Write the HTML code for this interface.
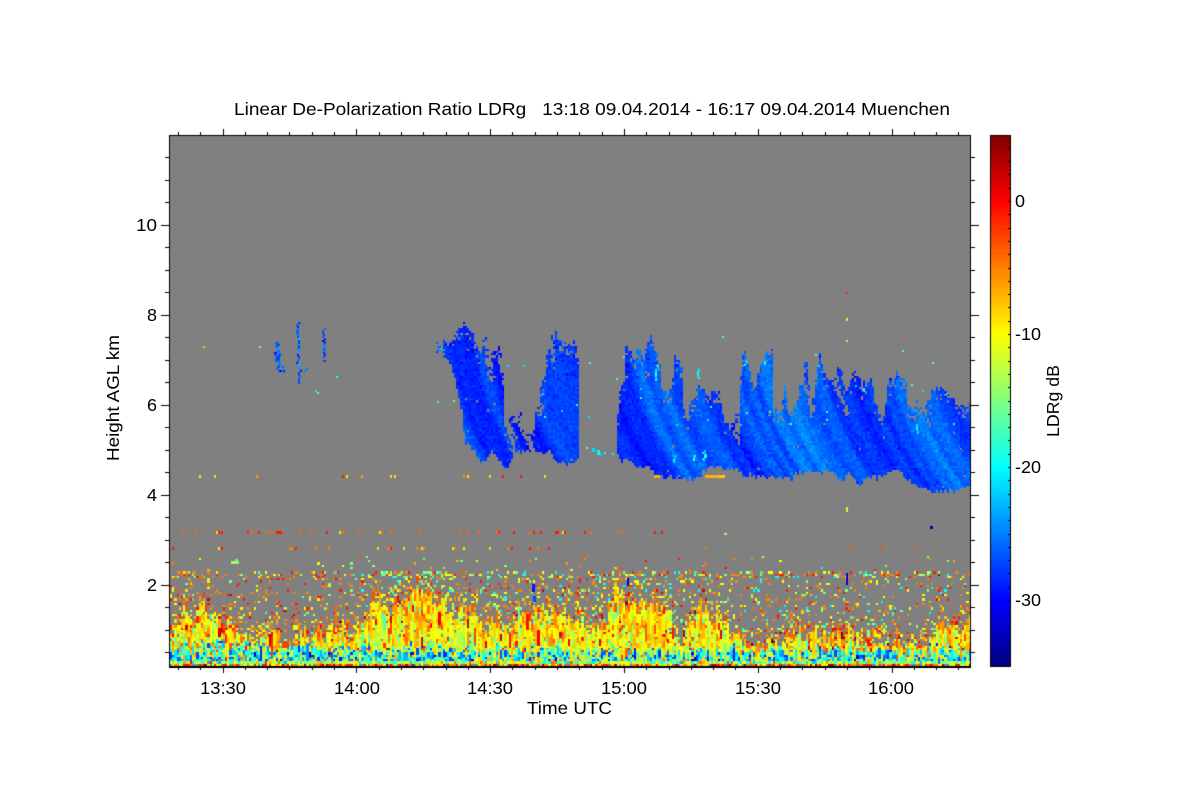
<!DOCTYPE html>
<html><head><meta charset="utf-8"><title>LDRg</title>
<style>
html,body{margin:0;padding:0;background:#fff;width:1200px;height:800px;overflow:hidden}
canvas,svg{position:absolute;left:0;top:0}
text{font-family:"Liberation Sans",sans-serif;font-size:17.5px;fill:#000}
</style></head><body>
<canvas id="c" width="1200" height="800"></canvas>
<svg width="1200" height="800" viewBox="0 0 1200 800">
<text x="234" y="115" textLength="716" lengthAdjust="spacingAndGlyphs" xml:space="preserve" style="white-space:pre">Linear De-Polarization Ratio LDRg   13:18 09.04.2014 - 16:17 09.04.2014 Muenchen</text>
<text x="200" y="694" textLength="46" lengthAdjust="spacingAndGlyphs">13:30</text>
<text x="334" y="694" textLength="46" lengthAdjust="spacingAndGlyphs">14:00</text>
<text x="467" y="694" textLength="46" lengthAdjust="spacingAndGlyphs">14:30</text>
<text x="601" y="694" textLength="46" lengthAdjust="spacingAndGlyphs">15:00</text>
<text x="735" y="694" textLength="46" lengthAdjust="spacingAndGlyphs">15:30</text>
<text x="868" y="694" textLength="46" lengthAdjust="spacingAndGlyphs">16:00</text>
<text x="527" y="714" textLength="85" lengthAdjust="spacingAndGlyphs">Time UTC</text>
<text x="136" y="231" textLength="21" lengthAdjust="spacingAndGlyphs">10</text>
<text x="147" y="321" textLength="10" lengthAdjust="spacingAndGlyphs">8</text>
<text x="147" y="411" textLength="10" lengthAdjust="spacingAndGlyphs">6</text>
<text x="147" y="501" textLength="10" lengthAdjust="spacingAndGlyphs">4</text>
<text x="147" y="591" textLength="10" lengthAdjust="spacingAndGlyphs">2</text>
<text transform="translate(119,461) rotate(-90)" textLength="126" lengthAdjust="spacingAndGlyphs">Height AGL km</text>
<text x="1015" y="207" textLength="10" lengthAdjust="spacingAndGlyphs">0</text>
<text x="1015" y="340" textLength="26" lengthAdjust="spacingAndGlyphs">-10</text>
<text x="1015" y="473" textLength="26" lengthAdjust="spacingAndGlyphs">-20</text>
<text x="1015" y="606" textLength="26" lengthAdjust="spacingAndGlyphs">-30</text>
<text transform="translate(1059,437) rotate(-90)" textLength="72" lengthAdjust="spacingAndGlyphs">LDRg dB</text>
</svg>
<script>
(function(){
var ctx=document.getElementById('c').getContext('2d');
ctx.fillStyle='#fff';ctx.fillRect(0,0,1200,800);
var R=(function(s){return function(){s|=0;s=s+0x6D2B79F5|0;var t=Math.imul(s^s>>>15,1|s);t=t+Math.imul(t^t>>>7,61|t)^t;return((t^t>>>14)>>>0)/4294967296}})(12345);
function G(){return R()+R()+R()+R()-2}
function cl(a){return a<0?0:a>1?1:a}
function jet(v){var t=(v+35)/40;t=Math.round(cl(t)*127)/127;
 var r=cl(Math.min(4*t-1.5,-4*t+4.5)),g=cl(Math.min(4*t-.5,-4*t+3.5)),b=cl(Math.min(4*t+.5,-4*t+2.5));
 return 'rgb('+Math.round(r*255)+','+Math.round(g*255)+','+Math.round(b*255)+')'}
function interp(p,x){if(x<=p[0][0])return p[0][1];for(var i=1;i<p.length;i++){if(x<=p[i][0]){var a=p[i-1],b=p[i];return a[1]+(b[1]-a[1])*(x-a[0])/((b[0]-a[0])||1)}}return p[p.length-1][1]}
function sn(n,sc){var k=[],o=[];for(var i=0;i<n/sc+3;i++)k.push(R()*2-1);for(i=0;i<n;i++){var f=i/sc,a=Math.floor(f),w=f-a;w=w*w*(3-2*w);o.push(k[a]*(1-w)+k[a+1]*w)}return o}
function z3(a){return a.map(function(p){return[420+p[0]/3,310+p[1]/3]})}
function z4(a){return a.map(function(p){return[700+p[0]/3,320+p[1]/3]})}

ctx.fillStyle='#808080';ctx.fillRect(170,135,800,531);
var CW=2.2,CH=2.25,N=Math.ceil(800/CW);
function cell(i,j,v){var x=170+Math.round(i*CW),x2=170+Math.round((i+1)*CW),y=666-Math.round((j+1)*CH),y2=666-Math.round(j*CH);
 if(x2>970)x2=970;ctx.fillStyle=jet(v);ctx.fillRect(x,y,x2-x,y2-y)}
function dot(x,y,v,w,h){ctx.fillStyle=jet(v);ctx.fillRect(x,y,w||2,h||2)}

/* low level aerosol/noise */
var DT=[[170,620],[200,613],[230,625],[260,632],[290,642],[320,642],[350,630],[370,596],[400,592],[410,588],[430,598],[450,604],[480,610],[510,608],[540,604],[560,610],[580,625],[597,634],[610,605],[640,605],[660,595],[670,605],[680,638],[687,605],[703,611],[723,615],[740,627],[747,648],[797,638],[847,638],[880,643],[930,646],[947,636],[970,628]];
var nA=sn(N,12),nB=sn(N,3),colv=sn(N,2);
function sp(x){return x<360?.085:x<620?.17:x<690?.15:.1}
for(var i=0;i<N;i++){
 var x=170+i*CW,dt=interp(DT,x)+nA[i]*11+nB[i]*9+G()*8;
 var prev=null,low=null;
 var bt=(x<270?642:x<560?647:649)+nA[i]*2+G()*5;
 for(var j=0;j<62;j++){
  var yc=666-(j+.5)*CH,d=yc-dt,p,v;
  if(yc>=663.5){ if(R()<.8){var r=R();v=r<.42?-10+G()*3:r<.68?-5:r<.88?-1:3;cell(i,j,v)} continue}
  if(yc>=646)p=.985;else if(d>0)p=Math.min(.97,.65+d/20);else p=.45*Math.exp(d/12);
  var dense=R()<p;
  if(!dense){
   prev=null;
   var q=0;
   if(yc>578)q=sp(x);else if(yc>=572)q=x<220||x>350?.3:.22;else if(yc>555)q=.012;
   if(R()>=q)continue;
   var r=R();
   if(yc<578&&x>330&&x<540)v=r<.2?-5:r<.45?-10:r<.55?-1:r<.8?-15:-19;
   else if(x<345)v=r<.4?-5:r<.65?-9.5:r<.9?-1:-15;
   else v=r<.3?-5:r<.55?-10:r<.72?-1:r<.87?-15:-19.5;
   cell(i,j,v);continue}
  if(yc>=661)v=-13.5+G()*8;
  else if(yc>=bt){
   if(low!==null&&R()<.4)v=low;
   else{var mid=yc>=652?-18:-14.5;v=mid+G()*11;if(R()<.05)v=-27;if(R()<.08)v=-9}
   low=v}
  else{
   if(prev!==null&&R()<.55){v=prev}
   else{
   var lev=645-yc;v=-10+Math.min(Math.max(lev,0)*.05,2)+colv[i]*2+G()*4;if(R()<.06)v=-1+G()*4;if(R()<.03)v=-16;
   if(x>265&&x<350&&R()<.55)v+=4;
   if(x>745&&R()<.45)v+=3;
   if(d<5&&R()<.35)v+=3}
   prev=v
  }
  cell(i,j,v)
 }
}
/* horizontal speckle bands */
for(i=0;i<N;i++){var x=170+i*CW,r;
 if(x<665&&R()<.2){r=R();dot(Math.round(x),531,r<.45?-4:r<.78?-1:r<.9?-9:-12,2,3)}
 if(x>795&&x<815&&R()<.1)dot(Math.round(x),531,-3,2,3);
 if(x<560&&R()<.12){r=R();dot(Math.round(x),547,r<.5?-5:r<.8?-1:-9,2,3)}
 if(x>840&&R()<.05)dot(Math.round(x),547,-3,2,3);
 if(x<720&&R()<.07){r=R();dot(Math.round(x),475,r<.5?-9:r<.85?-6:-1,2,3)}
 if(x>540&&x<600&&R()<.03)dot(Math.round(x),555,-4,2,2);
}
dot(705,475,-7,16,3);dot(719,475,-8,6,3);dot(654,475,-7,6,3);
dot(231,561,-14,8,3);dot(235,559,-17,3,2);
dot(846,292,-2,2,2);dot(846,318,-12,2,3);dot(846,340,-13,2,2);dot(846,507,-12,2,5);dot(930,526,-33,3,3);
dot(846,573,-32,2,12);dot(627,578,-31,2,8);dot(532,584,-29,3,8);dot(533,596,-27,3,6);dot(203,346,-8,2,2);dot(259,346,-15,2,2);
dot(336,376,-18,2,2);dot(317,392,-17,2,2);

/* cirrus clouds */
var clouds=[
 {t:z3([[45,100],[60,100],[85,130],[100,90],[115,70],[135,38],[150,60],[165,100],[178,150],[190,90],[210,150],[238,80],[247,190],[240,290],[265,380],[280,420],[278,440]]),
  b:z3([[45,125],[60,150],[85,150],[100,200],[120,290],[130,380],[175,445],[195,460],[210,420],[240,455],[258,478],[278,440]])},
 {t:z3([[265,330],[290,270],[305,330],[320,375],[340,375],[342,300],[350,265],[365,240],[372,190],[385,100],[392,70],[410,62],[425,100],[450,85],[470,110],[476,180],[472,300],[462,340],[470,420],[482,440]]),
  b:z3([[265,380],[300,425],[385,428],[410,460],[450,460],[482,445]])},
 {t:z3([[585,370],[592,310],[600,230],[615,130],[630,110],[640,150],[655,110],[668,130],[690,60],[702,130],[715,150],[722,230],[750,235],[762,125],[780,130],[786,290],[800,320],[825,250],[860,260],[900,240]]).concat(
   z4([[30,210],[45,220],[60,280],[100,300],[115,280],[120,160],[130,100],[150,190],[165,210],[195,110],[215,110],[210,250],[240,290],[250,190],[265,300],[290,250],[315,110],[330,270],[355,120],[385,200],[410,150],[425,170],[430,210],[465,130],[480,200],[510,170],[520,240],[545,290],[565,170],[600,170],[620,180],[610,270],[640,260],[690,240],[692,200],[725,210],[760,260],[800,260],[810,240]])),
  b:z3([[585,440],[640,465],[680,475],[730,505],[780,505],[830,505],[860,470],[900,470]]).concat(
   z4([[20,440],[110,450],[125,470],[200,465],[245,475],[280,460],[400,455],[420,495],[440,450],[470,485],[590,450],[630,490],[690,518],[770,510],[810,490]]))}
];
var nT=sn(N,2),nU=sn(N,6);
var M=N+200,s1=sn(M,3),s2=sn(M,8),s3=sn(M,22),slit=sn(M,3);
clouds.forEach(function(c){
 var x0=c.t[0][0],x1=c.t[c.t.length-1][0];
 for(var i=0;i<N;i++){var x=170+i*CW;if(x<x0||x>x1)continue;
  var top=interp(c.t,x)-7+Math.abs(nT[i])*10+nU[i]*5+R()*3,bot=interp(c.b,x)+G()*2.5+(R()<.07?R()*9:0);
  for(var j=0;j<240;j++){var y=666-(j+.5)*CH;if(y<top||y>bot)continue;
   if(y-top<12&&R()<.22)continue;
   if(R()<.004)continue;
   var w=(y-335)/140;w=w<0?0:w;
   var u=x-44*w*w-6*w;
   var iu=Math.round((u-170)/CW)+100;if(iu<0)iu=0;if(iu>=M)iu=M-1;
   if(y-top<30&&slit[iu]<-.5&&R()<.75)continue;
   var s=s1[iu]*.8+s2[iu]*1.1+s3[iu]*.9;
   var v=-27.3+s*1.5+G()*.9;
   if(y<380&&R()<.06)v-=2;
   cell(i,j,v)}
 }
});
/* bright streak parts and stray specks */
[[655,365,16],[696,369,10],[703,450,12],[673,455,8],[693,455,6],[702,452,10],[915,424,10],[862,388,3],[763,361,4],[744,360,6]].forEach(function(a){for(var k=0;k<a[2];k+=2)dot(a[0]+Math.round(R()*2),a[1]+k,-20+G()*3,2,2)});
for(var k=0;k<34;k++){var sx=435+R()*520,sy=335+R()*90;dot(Math.round(sx),Math.round(sy),R()<.5?-21:-17,2,2)}
dot(592,448,-21,3,4);dot(597,450,-20,3,5);dot(600,453,-22,2,3);dot(604,452,-19,2,2);dot(586,447,-16,2,2);dot(612,453,-20,2,2);

/* small early clouds */
function streak(x,y0,y1,w){for(var y=y0;y<y1;y+=2){var o=Math.round(G()*1.2),ww=Math.max(2,w-Math.round(R()*1.5));if(R()<.95)dot(x+o,y,-26.5+G()*3,ww,2)}}
streak(275,342,362,4);streak(277,352,372,4);streak(283,366,374,2);
streak(297,322,350,3);streak(298,350,384,2);
streak(323,328,362,3);streak(305,368,372,2);
dot(315,390,-20,2,2);dot(336,376,-18,2,2);

/* colour bar */
for(var y=135;y<666;y++){ctx.fillStyle=jet(5-(y-135)/531*40);ctx.fillRect(990,y,20,1)}
/* frames & ticks */
ctx.fillStyle='#000';
function L(x,y,w,h){ctx.fillRect(x,y,w,h)}
L(169,135,802,1);L(169,666,802,2);L(169,135,1,532);L(970,135,1,532);
L(990,135,21,1);L(990,666,21,1);L(990,135,1,532);L(1010,135,1,532);
for(k=-2;k<36;k++){var tx=Math.round(222.5+k*22.3);if(tx<170||tx>970)continue;var mj=((k%6)+6)%6==0;
 L(tx,mj?129:132,1,mj?6:3);L(tx,667,1,mj?6:3)}
for(k=0;k<24;k++){var ty=Math.round(157+k*22.5);if(ty>665)break;var mj=((k-3)%4+4)%4==0;
 L(mj?161:165,ty,mj?8:4,1);L(971,ty,mj?8:4,1)}
for(k=-5;k<=35;k++){var ty=Math.round(201+k*13.3);if(ty<=136||ty>=665)continue;L(1008,ty,2,1)}
})();
</script>
</body></html>
